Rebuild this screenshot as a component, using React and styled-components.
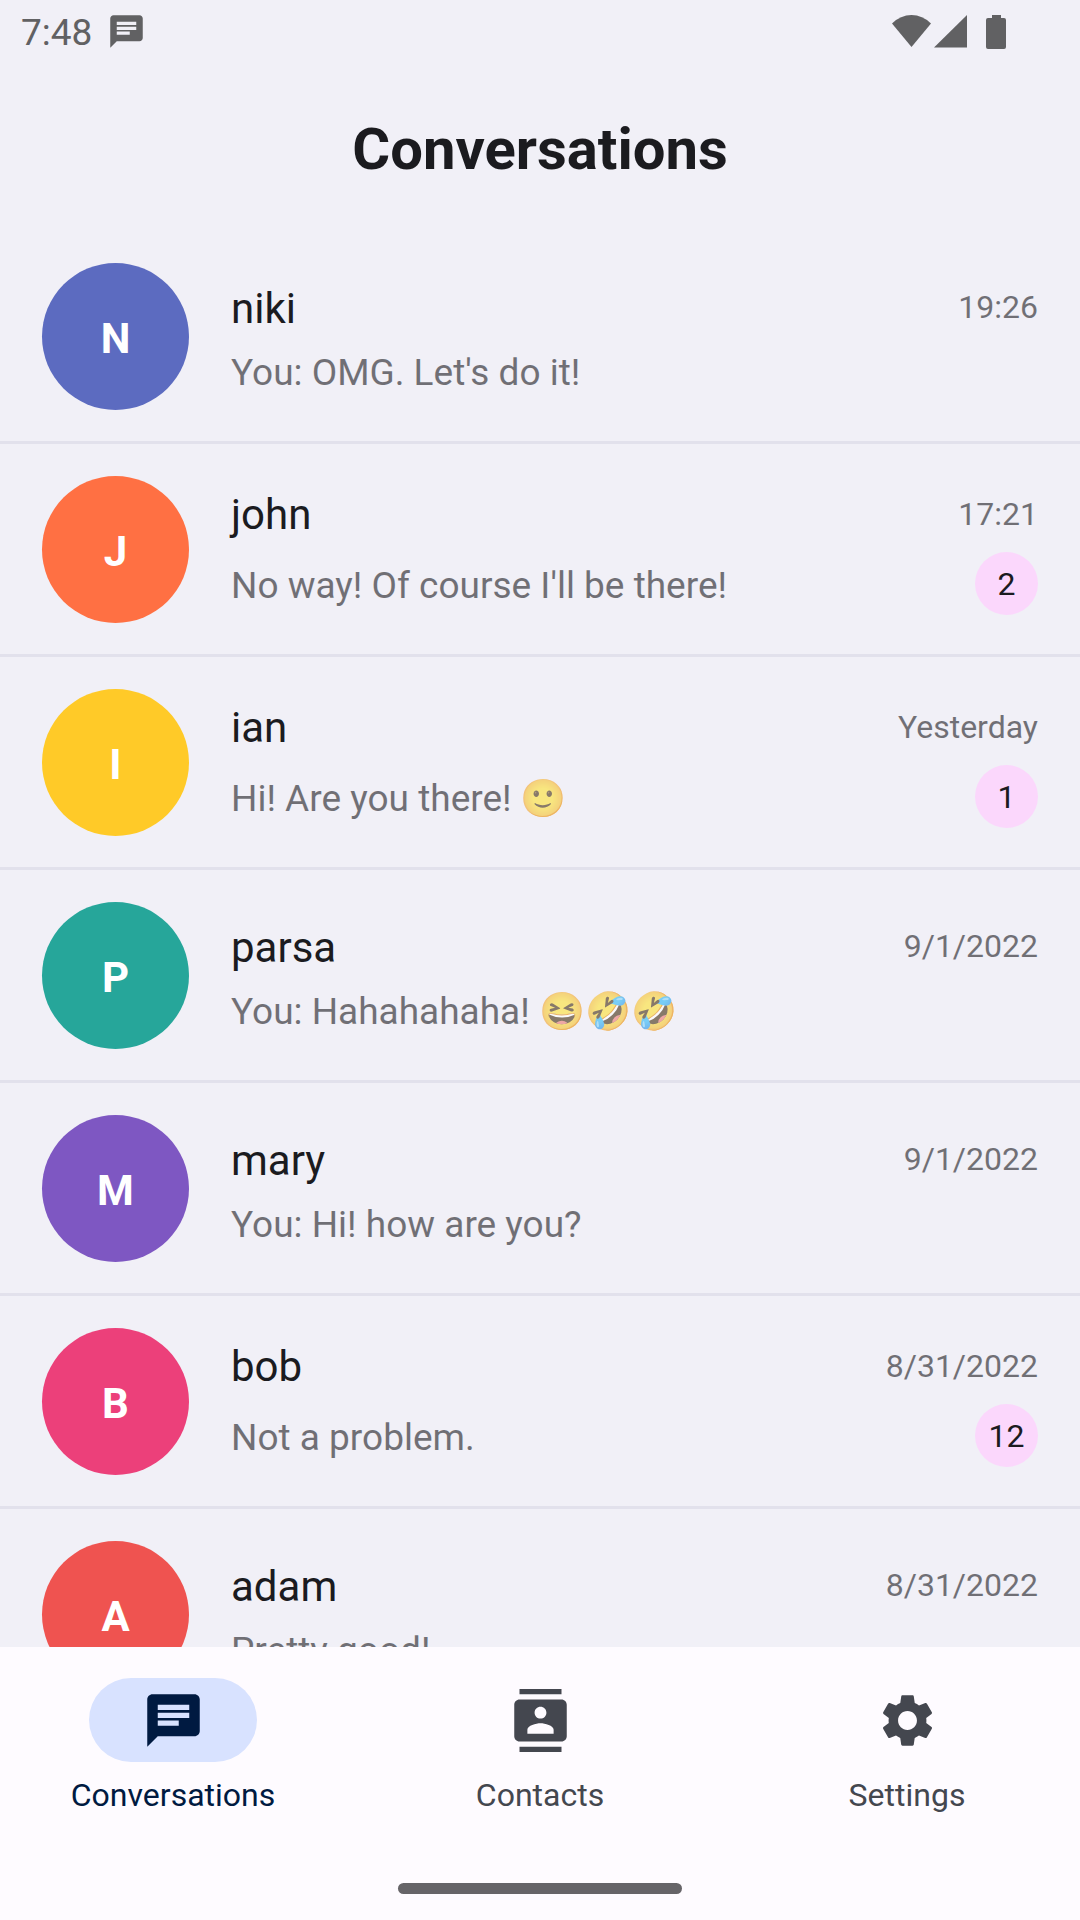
import React from "react";
import styled, { createGlobalStyle } from "styled-components";

const GlobalStyle = createGlobalStyle`
  * { box-sizing: border-box; }
  body { margin: 0; background: #f1f0f7; }
`;

const Screen = styled.div`
  display: flex;
  flex-direction: column;
  height: 100vh;
  background: #f1f0f7;
  color: #1b1b1f;
  font-family: Roboto, "Noto Color Emoji", sans-serif;
`;

const StatusBar = styled.div`
  flex: none;
  display: flex;
  align-items: center;
  justify-content: space-between;
  height: 63px;
  padding: 0 72px 0 21px;
  color: #616163;
`;

const StatusGroup = styled.div`
  display: flex;
  align-items: center;
  gap: ${(p) => p.$gap}px;
`;

const Clock = styled.time`
  padding-top: 2px;
  font-size: 37px;
  line-height: 66px;
`;

const Title = styled.h1`
  flex: none;
  margin: 0;
  padding-top: 4px;
  font-size: 58px;
  line-height: 164px;
  font-weight: 700;
  text-align: center;
`;

const List = styled.ul`
  flex: 1;
  min-height: 0;
  margin: 0;
  padding: 0;
  list-style: none;
  overflow-y: auto;
  scrollbar-width: none;
`;

const Item = styled.li`
  border-bottom: 3px solid #e2e1ec;
`;

const Row = styled.button`
  display: flex;
  align-items: center;
  gap: 42px;
  width: 100%;
  height: 210px;
  padding: 0 42px;
  border: 0;
  background: none;
  color: inherit;
  font: inherit;
  text-align: left;
  cursor: pointer;
`;

const Avatar = styled.span`
  flex: none;
  display: flex;
  align-items: center;
  justify-content: center;
  width: 147px;
  height: 147px;
  padding-top: 4px;
  border-radius: 50%;
  background: ${(p) => p.$color};
  color: #fff;
  font-size: 42px;
  font-weight: 700;
`;

const Body = styled.span`
  flex: 1;
  min-width: 0;
  display: flex;
  flex-direction: column;
  gap: 6px;
`;

const Line = styled.span`
  display: flex;
  align-items: center;
  justify-content: space-between;
`;

const Name = styled.span`
  font-size: 42px;
  line-height: 63px;
`;

const Time = styled.time`
  padding-bottom: 2px;
  font-size: 32px;
  line-height: 40px;
  opacity: 0.6;
`;

const Message = styled.span`
  padding-top: 4px;
  font-size: 37px;
  line-height: 46px;
  white-space: nowrap;
  opacity: 0.6;
`;

const Badge = styled.span`
  display: flex;
  align-items: center;
  justify-content: center;
  width: 63px;
  height: 63px;
  border-radius: 50%;
  background: #fbd7fc;
  font-size: 32px;
`;

const Footer = styled.footer`
  flex: none;
  background: #fefbff;
`;

const Nav = styled.nav`
  display: grid;
  grid-template-columns: repeat(3, 1fr);
  gap: 21px;
  height: 210px;
  padding-top: 31px;
`;

const NavItem = styled.button`
  display: flex;
  flex-direction: column;
  align-items: center;
  gap: 12px;
  padding: 0;
  border: 0;
  background: none;
  color: ${(p) => (p.$active ? "#001a41" : "#44474f")};
  font-family: inherit;
  font-size: 32px;
  line-height: 42px;
  cursor: pointer;
`;

const Pill = styled.span`
  display: flex;
  align-items: center;
  justify-content: center;
  width: 168px;
  height: 84px;
  border-radius: 42px;
  background: ${(p) => (p.$active ? "#d8e2ff" : "transparent")};
`;

const HomeIndicator = styled.div`
  display: flex;
  justify-content: center;
  height: 63px;
  padding-top: 26px;

  &::before {
    content: "";
    width: 284px;
    height: 11px;
    border-radius: 6px;
    background: #666468;
  }
`;

const Icon = ({ size, path }) => (
  <svg width={size} height={size} viewBox="0 0 24 24" fill="currentColor" aria-hidden="true">
    <path d={path} />
  </svg>
);

const CHAT =
  "M20 2H4c-1.1 0-2 .9-2 2v18l4-4h14c1.1 0 2-.9 2-2V4c0-1.1-.9-2-2-2zM6 6h12v2H6V6zm8 8H6v-2h8v2zm4-3H6V9h12v2z";
const CONTACTS =
  "M20 0H4v2h16V0zM4 24h16v-2H4v2zM20 4H4c-1.1 0-2 .9-2 2v12c0 1.1.9 2 2 2h16c1.1 0 2-.9 2-2V6c0-1.1-.9-2-2-2zm-8 2.75c1.24 0 2.25 1.01 2.25 2.25s-1.01 2.25-2.25 2.25S9.75 10.24 9.75 9 10.76 6.75 12 6.75zM17 17H7v-1.5c0-1.67 3.33-2.5 5-2.5s5 .83 5 2.5V17z";
const SETTINGS =
  "M19.14 12.94c.04-.3.06-.61.06-.94 0-.32-.02-.64-.07-.94l2.03-1.58c.18-.14.23-.41.12-.61l-1.92-3.32c-.12-.22-.37-.29-.59-.22l-2.39.96c-.5-.38-1.03-.7-1.62-.94l-.36-2.54c-.04-.24-.24-.41-.48-.41h-3.84c-.24 0-.43.17-.47.41l-.36 2.54c-.59.24-1.13.57-1.62.94l-2.39-.96c-.22-.08-.47 0-.59.22L2.74 8.87c-.12.21-.08.47.12.61l2.03 1.58c-.05.3-.09.63-.09.94s.02.64.07.94l-2.03 1.58c-.18.14-.23.41-.12.61l1.92 3.32c.12.22.37.29.59.22l2.39-.96c.5.38 1.03.7 1.62.94l.36 2.54c.05.24.24.41.48.41h3.84c.24 0 .44-.17.47-.41l.36-2.54c.59-.24 1.13-.56 1.62-.94l2.39.96c.22.08.47 0 .59-.22l1.92-3.32c.12-.22.07-.47-.12-.61l-2.01-1.58zM12 15.6c-1.98 0-3.6-1.62-3.6-3.6s1.62-3.6 3.6-3.6 3.6 1.62 3.6 3.6-1.62 3.6-3.6 3.6z";

const StatusGlyphs = () => (
  <svg width="116" height="36" viewBox="0 0 116 36" fill="currentColor" role="img" aria-label="Wi-Fi, mobile signal and battery full">
    <path d="M0 9.5Q8.500 1 19.500 1T39 9.500L19.500 33Z" />
    <path d="M42 33.500L75 1v32.500Z" />
    <path d="M100 1h9v3h3q2 0 2 2v27q0 2-2 2h-16q-2 0-2-2V6q0-2 2-2h4Z" />
  </svg>
);

const CONVERSATIONS = [
  { name: "niki", color: "#5c6bc0", time: "19:26", message: "You: OMG. Let's do it!" },
  { name: "john", color: "#ff7043", time: "17:21", message: "No way! Of course I'll be there!", unread: 2 },
  { name: "ian", color: "#ffca28", time: "Yesterday", message: "Hi! Are you there! 🙂", unread: 1 },
  { name: "parsa", color: "#26a69a", time: "9/1/2022", message: "You: Hahahahaha! 😆🤣🤣" },
  { name: "mary", color: "#7e57c2", time: "9/1/2022", message: "You: Hi! how are you?" },
  { name: "bob", color: "#ec407a", time: "8/31/2022", message: "Not a problem.", unread: 12 },
  { name: "adam", color: "#ef5350", time: "8/31/2022", message: "Pretty good!" },
];

const TABS = [
  { label: "Conversations", icon: CHAT, active: true },
  { label: "Contacts", icon: CONTACTS },
  { label: "Settings", icon: SETTINGS },
];

export default function App() {
  return (
    <Screen>
      <GlobalStyle />
      <StatusBar>
        <StatusGroup $gap={15}>
          <Clock>7:48</Clock>
          <Icon size={39} path={CHAT} />
        </StatusGroup>
        <StatusGlyphs />
      </StatusBar>
      <Title>Conversations</Title>
      <List>
        {CONVERSATIONS.map((c) => (
          <Item key={c.name}>
            <Row type="button">
              <Avatar $color={c.color} aria-hidden="true">{c.name[0].toUpperCase()}</Avatar>
              <Body>
                <Line>
                  <Name>{c.name}</Name>
                  <Time>{c.time}</Time>
                </Line>
                <Line>
                  <Message>{c.message}</Message>
                  {c.unread && <Badge>{c.unread}</Badge>}
                </Line>
              </Body>
            </Row>
          </Item>
        ))}
      </List>
      <Footer>
        <Nav aria-label="Main">
          {TABS.map((t) => (
            <NavItem key={t.label} type="button" $active={t.active} aria-current={t.active ? "page" : undefined}>
              <Pill $active={t.active}>
                <Icon size={63} path={t.icon} />
              </Pill>
              {t.label}
            </NavItem>
          ))}
        </Nav>
        <HomeIndicator />
      </Footer>
    </Screen>
  );
}
